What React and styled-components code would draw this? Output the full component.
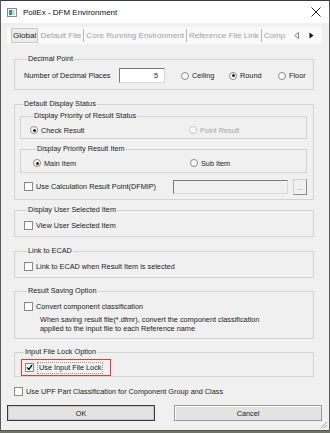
import React from 'react';
import styled, { createGlobalStyle } from 'styled-components';

const GlobalStyle = createGlobalStyle`
  html, body {
    margin: 0;
    padding: 0;
    background: #6b7560;
  }
  * {
    box-sizing: border-box;
  }
`;

const Window = styled.div`
  position: relative;
  width: 330px;
  height: 431px;
  border: 1px solid #5a5a5a;
  border-top-color: #3a3a3a;
  background: #f0f0f0;
  font-family: 'Liberation Sans', Arial, sans-serif;
  font-size: 7.3px;
  color: #1c1c1c;
  overflow: hidden;
`;

const TitleBar = styled.div`
  height: 22px;
  background: #ffffff;
  display: flex;
  align-items: center;
  padding: 0 6px 0 6px;
  gap: 6px;
  font-size: 8px;
  color: #111;
`;

const TitleText = styled.span`
  flex: 1;
`;

const CloseButton = styled.div`
  width: 14px;
  height: 14px;
  display: flex;
  align-items: center;
  justify-content: center;
`;

const Tabs = styled.div`
  margin: 4px 7px 0 6px;
  height: 17px;
  background: #f9f9f9;
  display: flex;
  align-items: center;
  padding-left: 4px;
  font-size: 8.1px;
  color: #a3a3a3;
  white-space: nowrap;
`;

const Tab = styled.span`
  padding: 0 2px;
  line-height: 13px;
  border-left: ${(p) => (p.first ? 'none' : '1px solid #b8b8b8')};
  color: ${(p) => (p.active ? '#222' : '#a3a3a3')};
  ${(p) => p.active && 'border: 1px solid #c8c8c8; background: #ececec; padding: 0 1px;'}
`;

const TabArrows = styled.div`
  margin-left: auto;
  display: flex;
  gap: 10px;
  padding-right: 8px;
  align-items: center;
`;

const Page = styled.div`
  display: flex;
  flex-direction: column;
  gap: 7px;
  padding: 10px 15px 0 13px;
`;

const Group = styled.fieldset`
  margin: ${(p) => p.mt || 0}px 0 0 0;
  padding: ${(p) => p.pad || '3px 5px 4px 5px'};
  border: 1px solid #d3d3d3;
  min-width: 0;
  display: flex;
  flex-direction: column;
  gap: ${(p) => p.gap || 0}px;
`;

const Legend = styled.legend`
  padding: 0 1px;
  margin-left: 3px;
  line-height: 10px;
  font-size: 7.3px;
`;

const Row = styled.div`
  display: flex;
  align-items: center;
  height: ${(p) => p.h || 14}px;
  padding-left: ${(p) => p.indent || 0}px;
`;

const Label = styled.span`
  color: ${(p) => (p.disabled ? '#a6a6a6' : '#1c1c1c')};
  white-space: nowrap;
`;

const Option = styled.label`
  display: flex;
  align-items: center;
  gap: 3px;
  width: ${(p) => (p.w ? `${p.w}px` : 'auto')};
  white-space: nowrap;
`;

const RadioDot = styled.span`
  width: 8px;
  height: 8px;
  border-radius: 50%;
  border: 1px solid ${(p) => (p.disabled ? '#c4c4c4' : '#8a8a8a')};
  background: #fff;
  display: flex;
  align-items: center;
  justify-content: center;
  &::after {
    content: '';
    width: 3px;
    height: 3px;
    border-radius: 50%;
    background: ${(p) => (p.checked ? '#222' : 'transparent')};
  }
`;

const Box = styled.span`
  width: 9px;
  height: 9px;
  border: 1px solid #8a8a8a;
  background: #fff;
  display: flex;
  align-items: center;
  justify-content: center;
  flex: none;
`;

const TextInput = styled.div`
  width: ${(p) => p.w}px;
  height: ${(p) => p.h || 15}px;
  border: 1px solid #7a7a7a;
  border-right-color: #d8d8d8;
  border-bottom-color: #d8d8d8;
  background: ${(p) => (p.disabled ? '#f0f0f0' : '#fff')};
  display: flex;
  align-items: center;
  justify-content: flex-end;
  padding-right: 6px;
`;

const SmallButton = styled.div`
  width: 14px;
  height: 16px;
  margin-left: 5px;
  border: 1px solid #d0d0d0;
  border-right-color: #8a8a8a;
  border-bottom-color: #8a8a8a;
  background: #f0f0f0;
  color: #808080;
  font-size: 7px;
  line-height: 7px;
  display: flex;
  align-items: flex-end;
  justify-content: center;
  padding-bottom: 3px;
`;

const Note = styled.div`
  padding-left: 16px;
  line-height: 9px;
  margin-top: 2px;
`;

const Highlight = styled.div`
  display: flex;
  align-items: center;
  gap: 3px;
  width: 90px;
  height: 17px;
  padding-left: 3px;
  border: 1.5px solid #e23a3a;
`;

const FocusText = styled.span`
  border: 1px dotted #9a9a9a;
  padding: 0 1px;
  line-height: 10px;
`;

const Footer = styled.div`
  display: flex;
  justify-content: space-between;
  padding: 0 7px 0 6px;
  margin-top: 7px;
`;

const Button = styled.div`
  width: 148px;
  height: 16px;
  display: flex;
  align-items: center;
  justify-content: center;
  background: #e3e3e3;
  border: 1px solid ${(p) => (p.primary ? '#3a3a3a' : '#9a9a9a')};
  box-shadow: ${(p) => (p.primary ? 'inset 0 0 0 1px #c9c9c9' : 'inset 1px 1px 0 #fff')};
`;

const Grip = styled.svg`
  position: absolute;
  right: 1px;
  bottom: 1px;
`;

const Radio = ({ checked, disabled, children, w }) => (
  <Option w={w}>
    <RadioDot checked={checked} disabled={disabled} />
    <Label disabled={disabled}>{children}</Label>
  </Option>
);

const Tick = () => (
  <svg width="7" height="7" viewBox="0 0 7 7">
    <path d="M1 3.5 L3 5.5 L6 1" stroke="#111" strokeWidth="1.4" fill="none" />
  </svg>
);

const Check = ({ checked, children, w }) => (
  <Option w={w}>
    <Box>{checked && <Tick />}</Box>
    <Label>{children}</Label>
  </Option>
);

export default function App() {
  return (
    <>
      <GlobalStyle />
      <Window>
        <TitleBar>
          <svg width="10" height="9" viewBox="0 0 10 9">
            <rect x="0.5" y="0.5" width="9" height="8" fill="#fff" stroke="#8a8a8a" />
            <rect x="2" y="2" width="3" height="5" fill="#2f9a7a" />
            <rect x="5" y="2" width="3" height="5" fill="#c8d6e0" />
          </svg>
          <TitleText>PollEx - DFM Environment</TitleText>
          <CloseButton>
            <svg width="10" height="10" viewBox="0 0 10 10">
              <path d="M0.5 0.5 L9.5 9.5 M9.5 0.5 L0.5 9.5" stroke="#222" strokeWidth="1" />
            </svg>
          </CloseButton>
        </TitleBar>

        <Tabs>
          <Tab first active>Global</Tab>
          <Tab first>Default File</Tab>
          <Tab>Core Running Environment</Tab>
          <Tab>Reference File Link</Tab>
          <Tab>Comp</Tab>
          <TabArrows>
            <svg width="5" height="7" viewBox="0 0 5 7">
              <path d="M4.5 0.5 L0.8 3.5 L4.5 6.5 Z" fill="none" stroke="#666" strokeWidth="0.8" />
            </svg>
            <svg width="5" height="7" viewBox="0 0 5 7">
              <path d="M0.5 0.5 L4.5 3.5 L0.5 6.5 Z" fill="#111" />
            </svg>
          </TabArrows>
        </Tabs>

        <Page>
          <Group pad="3px 5px 5px 9px">
            <Legend>Decimal Point</Legend>
            <Row h={17}>
              <Label style={{ width: 95 }}>Number of Decimal Places</Label>
              <TextInput w={46}>5</TextInput>
              <div style={{ width: 16 }} />
              <Radio w={48}>Ceiling</Radio>
              <Radio w={49} checked>Round</Radio>
              <Radio>Floor</Radio>
            </Row>
          </Group>

          <Group pad="2px 6px 4px 5px" gap={5} mt={2}>
            <Legend>Default Display Status</Legend>
            <Group pad="2px 5px 1px 9px">
              <Legend>Display Priority of Result Status</Legend>
              <Row>
                <Radio w={159} checked>Check Result</Radio>
                <Radio disabled>Point Result</Radio>
              </Row>
            </Group>
            <Group pad="2px 5px 2px 12px">
              <Legend>Display Priority Result Item</Legend>
              <Row>
                <Radio w={157} checked>Main Item</Radio>
                <Radio>Sub Item</Radio>
              </Row>
            </Group>
            <Row h={17} indent={4}>
              <Check w={149}>Use Calculation Result Point(DFMIP)</Check>
              <TextInput w={115} h={14} disabled />
              <SmallButton>...</SmallButton>
            </Row>
          </Group>

          <Group pad="3px 5px 4px 9px" mt={-2}>
            <Legend>Display User Selected Item</Legend>
            <Row>
              <Check>View User Selected Item</Check>
            </Row>
          </Group>

          <Group pad="3px 5px 4px 9px" mt={2}>
            <Legend>Link to ECAD</Legend>
            <Row>
              <Check>Link to ECAD when Result Item is selected</Check>
            </Row>
          </Group>

          <Group pad="3px 5px 5px 9px" mt={1}>
            <Legend>Result Saving Option</Legend>
            <Row>
              <Check>Convert component classification</Check>
            </Row>
            <Note>
              When saving result file(*.dfmr), convert the component classification
              <br />
              applied to the input file to each Reference name
            </Note>
          </Group>

          <Group pad="2px 5px 0 6px" mt={1}>
            <Legend>Input File Lock Option</Legend>
            <Highlight>
              <Box>
                <Tick />
              </Box>
              <FocusText>Use Input File Lock</FocusText>
            </Highlight>
          </Group>

          <Row>
            <Check>Use UPF Part Classification for Component Group and Class</Check>
          </Row>
        </Page>

        <Footer>
          <Button primary>OK</Button>
          <Button>Cancel</Button>
        </Footer>

        <Grip width="8" height="8" viewBox="0 0 8 8">
          <path d="M7 1 L1 7 M7 4 L4 7" stroke="#a0a0a0" strokeWidth="1" />
        </Grip>
      </Window>
    </>
  );
}
